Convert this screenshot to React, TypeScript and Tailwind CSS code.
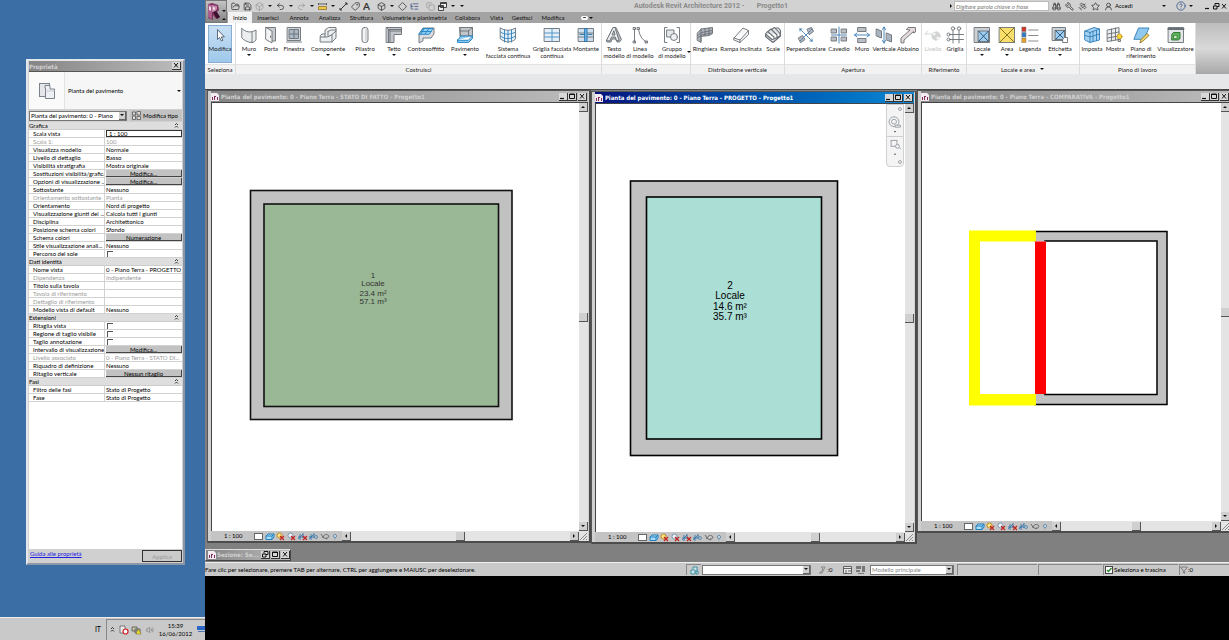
import React, { useState } from "react";
import type { ReactNode } from "react";
import {
  FolderOpen, Save, Undo2, Redo2, Tag, Box, Diamond, ListTree, Copy,
  Binoculars, Wrench, Satellite, Star, UserRound, CircleHelp, Funnel, Volume2,
} from "lucide-react";

const SK = { fill: "none", stroke: "#6a6f75", strokeWidth: 0.9, strokeLinejoin: "round" as const, strokeLinecap: "round" as const };

function Svg({ children }: { children: ReactNode }) {
  return (
    <svg className="block h-[18px] w-[18px] shrink-0" viewBox="0 0 18 18" aria-hidden="true" {...SK}>
      {children}
    </svg>
  );
}

const ICONS: Record<string, ReactNode> = {
  cursor: <path d="M6.500 4v9.500l2.200-2 1.600 3.500 1.600-.7-1.600-3.400H13z" fill="#fff" stroke="#3c4a58" strokeWidth=".8" />,
  wall: <path d="M2 2.500c4 4 9 4.500 14 1.500v10c-1 1.500-2.500 2.500-4 2.500-4 0-8-2-10-4.500zM12 16.500V6" fill="#eceef0" />,
  door: <><path d="M4 1.500h9.500V15H10" fill="#c9cdd1" /><path d="M4 1.500l6 3.500v12l-6-3.500z" fill="#f3f4f5" /><path d="M8.500 10v1.500" /></>,
  window: <><rect x="2.500" y="1.500" width="13" height="13" fill="#d3d6da" /><rect x="4.500" y="3.500" width="9" height="9" fill="#a9b7c6" /><path d="M9 3.500v9M4.500 8h9M1.500 16h15" /></>,
  component: <><path d="M1.500 9.500L3 8h3V4l3.500-2.500H17V12l-4 4H1.500z" fill="#eceef0" /><path d="M6 8v3H1.500M6 11h2.500l4-2M9 5.500l3-1.500h5M9 5.500V10M13 8.500V16M13 8.500L17 5" /></>,
  column: <><rect x="6" y="1.500" width="6" height="15" rx="2.500" fill="#f2f3f4" /><path d="M10 3.500v11" stroke="#bbb" /></>,
  roof: <><path d="M1.500 1.500h15v7H9v8H1.500z" fill="#c3c6ca" /><path d="M1.500 1.500L5 5h11.500M5 5v11.500M3.500 3.500h13M3.500 3.500v13" /></>,
  ceiling: <><path d="M2 16.500V8L6 2h11v6l-3 4H6v2.500z" fill="#d9dde1" /><path d="M2 8l4-5.500h10L12.500 8z" fill="#8fd0f5" stroke="#2283c4" /><path d="M7 2.500L4 8M12 2.500L8 8M4 5.500h10" stroke="#2283c4" /></>,
  floor: <><path d="M4 1.500h12.500V10H5z" fill="#c2c6ca" /><path d="M4 1.500v9M12.500 5L16.500 1.500M12.500 5v5M4 5h8.500" /><path d="M1.500 14l3.500-4h11.500l-4 4zM1.500 14v2.500h11l4-4V10" fill="#8cc9f1" stroke="#2283c4" /></>,
  curtain: <><path d="M1.500 2c4 3 10 3 15 0v11c-4 4-10 4-15 0z" fill="#e3f1fa" /><path d="M5.500 4v12M9 4.500v12M12.500 4v12" stroke="#337eb5" /><path d="M1.500 6c4 3 10 3 15 0M1.500 10c4 3.500 10 3.500 15 0" stroke="#337eb5" /></>,
  grid: <><rect x="1.500" y="2.500" width="15" height="13" fill="#e2effa" /><path d="M9 2.500v13M1.500 7h15M1.500 11h15" stroke="#4a8dc0" /></>,
  mullion: <><rect x="1.500" y="2.500" width="15" height="13" fill="#d0e0ee" /><path d="M1.500 7h15M1.500 11h15" /><path d="M8 2.500h2v13H8zM3 8.500h4M11 8.500h4" fill="#74b9ea" stroke="#1e71ae" /></>,
  text: <><path d="M1.500 15L8 1.500h3l5.500 12-2 2.500h-2.500L10.500 13H7l-1 3H2.500z" fill="#b5babf" /><path d="M1.500 14.500L8 1.500h2l4 13h-2.500L10.300 11H6.500L5 14.500zM7.500 9H10L9 5z" fill="#eceef0" /></>,
  line: <path d="M3.500 3v13M7.500 3C8.500 9 10.500 13.500 15.500 16M2.500 1.500h2v2h-2zM2.500 15h2v2h-2zM6.500 1.500h2v2h-2zM14.500 15h2v2h-2z" />,
  group: <><path d="M4 1.500H1.500v15H4M14 1.500h2.500v15H14" /><rect x="4" y="4" width="7" height="7" fill="#e5e8ea" /><circle cx="11" cy="11" r="3.500" fill="#eef0f2" /></>,
  railing: <><path d="M1.500 7L5 3l11.500-1.500v6L13 9.500l-8 1v6l-3.500-2z" fill="#aeb4ba" /><path d="M1.500 9.500l4-3 11-2M1.500 12l4-3 10-2M5 3v12M9 2.500v7M13 2v7" /></>,
  ramp: <path d="M2 12L11 2l5.500 2.500v4L8 16.500 2 14zM2 12l6 2 8.500-9.500M8 14v2.500" fill="#f5f6f7" />,
  stairs: <path d="M1.500 8l2-2.500L10 11v2l-2 .5zM4.500 5L7 3l6 6v2.500l-2 1M8 3l2.500-1.500 5.500 6V10l-2 1M1.500 8v2.500L9 16.500l7.500-6.500V8M11.500 2l3 0 2 2.500V8" fill="#e0e2e5" strokeWidth="1.100" />,
  perp: <><path d="M10.500 3l4-1.500 2 4-4 3zM1.500 12l4-2.500 2.500 4-4 3z" fill="#b5b9be" /><path d="M3 3l12 12M3 3h2.500M3 3v2.500M15 15h-2.500M15 15v-2.500M3 15L15 3" stroke="#3a7ab3" strokeDasharray="2 1" /></>,
  shaft: <><path d="M1.500 3h5v4h-5zM1.500 11h5v4h-5zM11.500 3h5v4h-5zM11.500 11h5v4h-5z" fill="#babfc5" /><path d="M9 1v16M1.500 9h15" stroke="#3a7ab3" /></>,
  wallopen: <><path d="M5 1.500h8v4H5zM5 12.500h8v4H5z" fill="#babfc5" /><path d="M1.500 9h15M4 7L1.500 9 4 11M14 7l2.500 2-2.500 2" stroke="#3a7ab3" /></>,
  vertical: <><path d="M1.500 3l5 2v7l-5-2zM11.500 7l5 2v7l-5-2z" fill="#a8b4c0" /><path d="M9 1v16M7.500 3.500L9 1l1.500 2.500M7.500 14.500L9 17l1.500-2.500" stroke="#3a7ab3" /></>,
  dormer: <path d="M2 16.500V12L11 4 7.500 3.500 9 1.500h7.500V6l-2 1V5.500L5 14v2.500z" fill="#e4dadb" />,
  level: <><path d="M1 8h7M3.500 5L1.500 8" /><circle cx="12" cy="10" r="4" fill="#fff" /><path d="M12 6v8M8 10h8M12 10V6a4 4 0 0 1 4 4zM12 10v4a4 4 0 0 1-4-4z" fill="#777" /></>,
  gridlines: <><path d="M7 4v13M13 4v13M3.500 8.500H17.500M3.500 13.500H17.500" /><g fill="#fff"><circle cx="7" cy="2.500" r="1.700" /><circle cx="13" cy="2.500" r="1.700" /><circle cx="2.500" cy="8.500" r="1.500" /><circle cx="2.500" cy="13.500" r="1.500" /></g></>,
  room: <><rect x="1.500" y="1.500" width="15" height="15" fill="#cbd0d5" /><rect x="5.500" y="5" width="10" height="10.500" fill="#9dcdf0" /><path d="M5.500 5l10 10.500M15.500 5l-10 10.500" stroke="#254b72" /></>,
  area: <><rect x="1.500" y="1.500" width="15" height="15" fill="#f9df69" /><path d="M1.500 1.500l15 15M16.500 1.500l-15 15" stroke="#76651d" /></>,
  legend: <><g stroke="#777" strokeWidth=".5"><rect x="1" y="1" width="4" height="4.500" fill="#cf3528" /><rect x="1" y="6.500" width="4" height="4.500" fill="#2e7bc6" /><rect x="1" y="12" width="4" height="4.500" fill="#e5a028" /></g><path d="M7.500 4H17M7.500 9.500H17M7.500 15H17" strokeWidth=".8" /></>,
  tag: <><rect x="1.500" y="1.500" width="13" height="13" fill="#cbd0d5" /><rect x="4.500" y="4.500" width="9" height="9" fill="#9dcdf0" /><path d="M4.500 4.500l9 9M13.500 4.500l-9 9" stroke="#254b72" /><path d="M12 13l1.500-1.500h3v5H12z" fill="#fff" /></>,
  setplane: <><path d="M2 5l9-3.500L16.500 3v11L7 16.500 2 14z" fill="#a5d2f2" stroke="#2f7db8" /><path d="M7 6.500L16.500 3M2 5l5 1.500v10M2 9.500l5 1.500 9.500-3M10 5.500v10M13.500 4.500v10" stroke="#2f7db8" /></>,
  show: <><path d="M1.500 4L13 1.500v12L1.500 15.500zM5.500 3v12M9.500 2v12M1.500 8L13 6M1.500 12L13 10" fill="#eaecef" /><circle cx="13.500" cy="10.500" r="2.500" fill="#f8d83c" stroke="#c89b19" /><path d="M12.500 13.500h2v2h-2z" fill="#ccc" /></>,
  refplane: <><path d="M2 13L6.500 2H17l-5 11z" fill="#8fc9f0" stroke="#2f7db8" /><path d="M8 16.500l1-3 6-6 2 2-6.500 6z" fill="#f4d567" stroke="#8c7430" /></>,
  viewer: <><rect x="1.500" y="1.500" width="15" height="15" fill="#e3e6e8" /><path d="M1.500 3h15" strokeWidth="2" /><path d="M5 8l1.500-1.500h6.500v6L11.500 14H5z" fill="#5db25a" stroke="#2d7230" /><path d="M7 9.500h3v3H7z" fill="#c9eac5" stroke="#2d7230" strokeWidth=".6" /></>,
};

type Tool = { icon: string; label: string[]; w: string; arrow?: boolean; off?: boolean; on?: boolean; side?: boolean };
type Group = { name: string; w: string; tools: Tool[]; arrow?: boolean };

const GROUPS: Group[] = [
  { name: "Seleziona", w: "w-[31px]", tools: [{ icon: "cursor", label: ["Modifica"], w: "ml-[3px] w-6", on: true }] },
  { name: "Costruisci", w: "w-[366px]", tools: [
    { icon: "wall", label: ["Muro"], w: "ml-[2px] w-[22px]", arrow: true },
    { icon: "door", label: ["Porta"], w: "w-[22px]" },
    { icon: "window", label: ["Finestra"], w: "w-6" },
    { icon: "component", label: ["Componente"], w: "w-11", arrow: true },
    { icon: "column", label: ["Pilastro"], w: "w-[30px]", arrow: true },
    { icon: "roof", label: ["Tetto"], w: "w-7", arrow: true },
    { icon: "ceiling", label: ["Controsoffitto"], w: "w-9" },
    { icon: "floor", label: ["Pavimento"], w: "w-[42px]", arrow: true },
    { icon: "curtain", label: ["Sistema", "facciata continua"], w: "w-11" },
    { icon: "grid", label: ["Griglia facciata", "continua"], w: "w-11" },
    { icon: "mullion", label: ["Montante"], w: "w-6" },
  ] },
  { name: "Modello", w: "w-[89px]", tools: [
    { icon: "text", label: ["Testo", "modello"], w: "w-6" },
    { icon: "line", label: ["Linea", "di modello"], w: "w-7" },
    { icon: "group", label: ["Gruppo", "di modello"], w: "w-9", side: true },
  ] },
  { name: "Distribuzione verticale", w: "w-[94px]", tools: [
    { icon: "railing", label: ["Ringhiera"], w: "w-7" },
    { icon: "ramp", label: ["Rampa inclinata"], w: "w-11" },
    { icon: "stairs", label: ["Scale"], w: "w-5" },
  ] },
  { name: "Apertura", w: "w-[137px]", tools: [
    { icon: "perp", label: ["Perpendicolare"], w: "w-[42px]" },
    { icon: "shaft", label: ["Cavedio"], w: "w-6" },
    { icon: "wallopen", label: ["Muro"], w: "w-[22px]" },
    { icon: "vertical", label: ["Verticale"], w: "w-[22px]" },
    { icon: "dormer", label: ["Abbaino"], w: "w-[26px]" },
  ] },
  { name: "Riferimento", w: "w-[45px]", tools: [
    { icon: "level", label: ["Livello"], w: "w-[22px]", off: true },
    { icon: "gridlines", label: ["Griglia"], w: "w-[22px]" },
  ] },
  { name: "Locale e area", w: "w-[113px]", arrow: true, tools: [
    { icon: "room", label: ["Locale"], w: "w-[30px]", arrow: true },
    { icon: "area", label: ["Area"], w: "w-5", arrow: true },
    { icon: "legend", label: ["Legenda"], w: "w-[26px]" },
    { icon: "tag", label: ["Etichetta"], w: "w-[34px]", arrow: true },
  ] },
  { name: "Piano di lavoro", w: "w-[116px]", tools: [
    { icon: "setplane", label: ["Imposta"], w: "w-6" },
    { icon: "show", label: ["Mostra"], w: "w-[22px]" },
    { icon: "refplane", label: ["Piano di", "riferimento"], w: "w-[30px]" },
    { icon: "viewer", label: ["Visualizzatore"], w: "w-[39px]" },
  ] },
];

function Caret({ dir = "down" }: { dir?: "down" | "up" | "left" | "right" }) {
  const d = { down: "M1 2h4L3 4z", up: "M1 4h4L3 2z", left: "M4 1v4L2 3z", right: "M2 1v4l2-2z" }[dir];
  return <svg className="block h-[6px] w-[6px] shrink-0" viewBox="0 0 6 6" aria-hidden="true"><path d={d} fill="#111" /></svg>;
}

function Logo() {
  return (
    <button aria-label="Menu applicazione" className="flex h-[23px] w-[22px] shrink-0 items-center border border-[#777] bg-linear-to-b from-[#c4c4c4] to-[#858585] pl-px">
      <svg className="h-[18px] w-[14px] shrink-0" viewBox="0 0 14 18" aria-hidden="true">
        <path d="M1 1l4-1 6 2 1 5-2 2 3 5-4 2-3-4v5l-5-2z" fill="#7d2f5c" />
        <path d="M1 1l4 1v14l-4-2z" fill="#a85f8c" /><path d="M5 2l5 1v3L8 9l-3 0z" fill="#c48aae" /><path d="M6 9l3-1 4 6-3 2z" fill="#3e1030" />
        <path d="M2 3l2 1v4L2 7zM6 4l2 .500v2L6 7z" fill="#f2dce8" />
      </svg>
      <span className="flex h-full flex-col justify-between pt-[7px]"><Caret /><Caret dir="up" /></span>
    </button>
  );
}

function TitleBar() {
  const ic = "h-[9px] w-[9px] shrink-0";
  return (
    <div className="flex h-3 items-center overflow-hidden bg-[#d2d2d2] text-[#333]">
      <div className="flex flex-1 items-center pl-1">
        <div className="flex items-center gap-[3px]">
          <FolderOpen className={ic} /><Save className={ic} /><Box className="h-[9px] w-[9px] shrink-0 text-[#999]" /><Caret />
          <Undo2 className={ic} /><Caret /><Redo2 className="h-[9px] w-[9px] shrink-0 text-[#999]" /><Caret />
          <svg className={ic} viewBox="0 0 9 9" aria-hidden="true"><path d="M.5 4.500h8v3h-8z" fill="#f0c64a" stroke="#86691a" strokeWidth=".7" /><path d="M.5 1v2M8.500 1v2M.5 2h8" stroke="#444" strokeWidth=".8" /></svg><Caret />
          <svg className={ic} viewBox="0 0 9 9" aria-hidden="true"><path d="M1 8l7-7M1 6v2h2M6 1h2v2" fill="none" stroke="#333" /></svg>
          <Tag className="h-[9px] w-[9px] shrink-0 -scale-x-100" />
          <span className="text-[10px] leading-3 font-bold">A</span>
          <span className="w-px" />
          <Box className={ic} /><Caret /><Diamond className={ic} /><ListTree className="h-[9px] w-[9px] shrink-0 text-[#334a80]" />
          <span className="w-px" />
          <Copy className="h-[9px] w-[9px] shrink-0 text-[#999]" />
          <svg className={ic} viewBox="0 0 9 9" fill="#eee" stroke="#333" strokeWidth=".9" aria-hidden="true"><path d="M2.500.500h6v5h-6zM2.500 1.500h6M.5 3.500h5v5h-5zM.5 4.500h5" /></svg>
          <Caret /><Caret />
        </div>
      </div>
      <div className="flex w-[314px] shrink-0 gap-3 font-['Roboto',sans-serif] text-[7px] leading-3 font-bold text-[#8a8a8a]"><span>Autodesk Revit Architecture 2012 -</span><span>Progetto1</span></div>
      <div className="flex w-[281px] shrink-0 items-center">
        <Caret dir="right" />
        <input aria-label="Ricerca" placeholder="Digitare parola chiave o frase" className="h-[10px] w-[95px] border border-[#bbb] bg-white px-px text-[6px] italic placeholder:text-[#777]" />
        <div className="ml-[3px] flex items-center gap-[4px]"><Binoculars className={ic} /><Wrench className="h-[9px] w-[9px] shrink-0 -scale-x-100" /><Satellite className={ic} /><Star className={ic} /><UserRound className={ic} /></div>
        <span className="ml-0.5 w-[46px] text-[6px] leading-3 text-black">Accedi</span><Caret />
        <span className="w-[9px]" /><CircleHelp className="h-[10px] w-[10px] text-[#36598c]" /><span className="w-0.5" /><Caret />
        <div className="ml-auto flex pr-px"><WinGlyph kind="min" /><WinGlyph kind="restore" /><WinGlyph kind="close" /></div>
      </div>
    </div>
  );
}

function WinGlyph({ kind }: { kind: "min" | "max" | "restore" | "close" }) {
  return (
    <svg className="h-[7px] w-[8px] shrink-0" viewBox="0 0 8 7" aria-hidden="true" fill="none" stroke="#111">
      {kind === "min" && <path d="M1 5.500h4" strokeWidth="1.200" />}
      {kind === "max" && <path d="M1.500 1h5v4.500h-5zM1.500 1.500h5" />}
      {kind === "restore" && <path d="M3 2.500v-2h4v3H5M1.500 3h3.500v3H1.500z" />}
      {kind === "close" && <path d="M2 1l4 4.500M6 1L2 5.500" />}
    </svg>
  );
}

function WinButton({ kind, label }: { kind: "min" | "max" | "restore" | "close"; label: string }) {
  return (
    <button aria-label={label} className="flex h-2 w-[9px] shrink-0 items-center justify-center overflow-hidden border-r border-b border-[#333] bg-[#d8d8d8]">
      <WinGlyph kind={kind} />
    </button>
  );
}

const TABS: [string, string][] = [
  ["Inizio", "w-6"], ["Inserisci", "w-8"], ["Annota", "w-[30px]"], ["Analizza", "w-[31px]"], ["Struttura", "w-[33px]"],
  ["Volumetrie e planimetria", "w-[73px]"], ["Collabora", "w-[33px]"], ["Vista", "w-[25px]"], ["Gestisci", "w-[26px]"], ["Modifica", "w-[36px]"],
];

function Tabs({ active, pick }: { active: string; pick: (t: string) => void }) {
  return (
    <nav className="flex h-[11px] items-center overflow-hidden bg-[#a3a3a3] pl-px text-[6px] leading-[10px]">
      {TABS.map(([t, w]) => (
        <button key={t} onClick={() => pick(t)} className={`${w} h-full shrink-0 text-center whitespace-nowrap ${t === active ? "bg-[#f2f2f2]" : "text-[#111]"}`}>{t}</button>
      ))}
      <span className="ml-[10px] flex h-1 w-[7px] items-center justify-center rounded-xs bg-white"><span className="h-px w-[3px] bg-[#444]" /></span><Caret />
    </nav>
  );
}

function Ribbon() {
  return (
    <div className="flex h-[51px] bg-linear-to-b from-[#bdbdbd] via-[#d9d9d9] to-[#a8a8a8] text-[6px] leading-[7px] text-[#222]">
      {GROUPS.map((g) => (
        <section key={g.name} className={`flex shrink-0 flex-col border-r border-[#dcdcdc] bg-white ${g.w}`}>
          <div className="flex h-[41px] pt-[2px]">
            {g.tools.map((t) => (
              <button key={t.label[0]} className={`flex shrink-0 flex-col items-center ${t.w} ${t.on ? "h-[38px] border border-[#86aed2] bg-linear-to-b from-[#c9e0f4] to-[#9fc8ea]" : "pt-px"} ${t.off ? "opacity-30" : ""}`}>
                <Svg>{ICONS[t.icon]}</Svg>
                <span className="relative mt-px flex flex-col whitespace-nowrap">
                  {t.label.map((l) => <span key={l}>{l}</span>)}
                  {t.side && <span className="absolute bottom-1 left-full"><Caret /></span>}
                </span>
                {t.arrow && <Caret />}
              </button>
            ))}
          </div>
          <div className="flex h-[10px] items-center justify-center gap-1 border-t border-[#e2e2e2] bg-[#f2f2f2] pb-px">{g.name}{g.arrow && <Caret />}</div>
        </section>
      ))}
    </div>
  );
}

const BTN = "flex h-[9px] w-[9px] shrink-0 items-center justify-center border-r border-b border-[#555] bg-[#d0d0d0]";

function ViewIcons() {
  return (
    <svg className="h-[9px] w-[86px] shrink-0" viewBox="0 0 86 9" fill="none" aria-hidden="true">
      <rect x=".5" y="1.500" width="8" height="6" fill="#fff" stroke="#666" />
      <path d="M12 4l2-2h6v3l-2 2.500h-6zM12 4h6v3.500M18 4l2-2" fill="#a9dcf8" stroke="#207fbc" />
      <circle cx="25.500" cy="3.500" r="2.500" fill="#ffe483" stroke="#bb8b22" /><path d="M26 4l4 4M30 4l-4 4" stroke="#c2231d" strokeWidth="1.200" />
      <circle cx="36.500" cy="3.500" r="2.500" fill="#edf5fa" stroke="#7b96b0" /><path d="M37 4l4 4M41 4l-4 4" stroke="#c2231d" strokeWidth="1.200" />
      <path d="M44 5h6M46 2v6M49 1v5M44 7l5-5" stroke="#286fa9" strokeWidth=".8" /><path d="M49 4l4 4M53 4l-4 4" stroke="#c2231d" strokeWidth="1.200" />
      <path d="M55 5h6M57 2v6M60 1v5M55 7l5-5" stroke="#286fa9" strokeWidth=".8" /><circle cx="62" cy="5" r="1.500" stroke="#5a8fb7" />
      <path d="M67 2l2 3c2-3 3-3 5-2s0 4-2 3M68 5l5 2" stroke="#555" strokeWidth=".8" />
      <circle cx="81" cy="4" r="1.500" fill="#e8f3fa" stroke="#6287a4" /><path d="M80.500 7h1" stroke="#6287a4" />
    </svg>
  );
}

function Grip() {
  return <svg className="h-[9px] w-[9px] shrink-0" viewBox="0 0 9 9" aria-hidden="true"><path d="M1 8l7-7M4 8l4-4M7 8l1-1" stroke="#888" /></svg>;
}

function DrawWindow({ title, frame, height, activeWin, children }: { title: string; frame: string; height: string; activeWin?: boolean; children: ReactNode }) {
  return (
    <section className={`flex min-w-0 flex-col border-t border-l border-[#555] bg-[#d0d0d0] ${frame}`}>
      <div className="flex flex-col border-r-2 border-b-2 border-[#4c4c4c] pr-px pl-[3px]">
        <header className={`flex h-[11px] items-center gap-0.5 pr-px font-['DejaVu_Sans_Condensed','DejaVu_Sans',sans-serif] text-[6px] font-bold ${activeWin ? "bg-linear-to-r from-[#06127e] to-[#1188d4] text-white" : "bg-linear-to-r from-[#858585] to-[#bcbcbc] text-[#d0d0d0]"}`}>
          <DocIcon />
          <span className="min-w-0 flex-1 truncate leading-[10px]">{title}</span>
          <div className="flex"><WinButton kind="min" label="Riduci a icona" /><WinButton kind="max" label="Ingrandisci" /><span className="w-px" /><WinButton kind="close" label="Chiudi" /></div>
        </header>
        <div className={`flex border-t border-l border-[#444] ${height}`}>
          <div className="relative min-w-0 flex-1 bg-white">{children}</div>
          <div className="flex w-[9px] shrink-0 flex-col bg-[#e4e4e4]">
            <button aria-label="Scorri su" className={BTN}><Caret dir="up" /></button>
            <div className="flex-1" /><div className={BTN} /><div className="flex-1" />
            <button aria-label="Scorri giù" className={BTN}><Caret /></button>
          </div>
        </div>
        <footer className="flex h-[10px] items-center bg-[#e4e4e4]">
          <div className="flex w-[131px] shrink-0 items-center bg-[#c4c4c4] text-[6px] leading-[10px]">
            <span className="w-[43px] shrink-0 pl-[13px]">1 : 100</span><ViewIcons />
          </div>
          <button aria-label="Scorri a sinistra" className={BTN}><Caret dir="left" /></button>
          <div className="flex-1" /><div className={BTN} /><div className="flex-1" />
          <button aria-label="Scorri a destra" className={BTN}><Caret dir="right" /></button>
          <Grip />
        </footer>
      </div>
    </section>
  );
}

function DocIcon() {
  return (
    <svg className="h-2 w-[8px] shrink-0" viewBox="0 0 8 8" aria-hidden="true">
      <path d="M0 0h6l2 2v6H0z" fill="#f3e9f0" /><path d="M1 4h1v3H1zM3 3h2v1H4v3H3zM6 4h1v3H6z" fill="#7d2c5c" />
    </svg>
  );
}

const PLAN = "block h-full w-full font-['Liberation_Sans',sans-serif]";

function PlanStato() {
  return (
    <svg className={PLAN}>
      <g stroke="#111" strokeWidth="1.600">
        <rect x="38.500" y="87.500" width="261.500" height="229" fill="#c1c1c1" />
        <rect x="52" y="101" width="234.500" height="202.500" fill="#9ab896" />
      </g>
      <g fontSize="8" fill="#333" textAnchor="middle">
        <text x="161" y="175">1</text><text x="161" y="183">Locale</text><text x="161" y="193">23.4 m²</text><text x="161" y="201">57.1 m³</text>
      </g>
    </svg>
  );
}

function PlanProgetto() {
  return (
    <svg className={PLAN}>
      <g stroke="#000" strokeWidth="1.600">
        <rect x="34.500" y="77" width="207" height="274.500" fill="#c1c1c1" />
        <rect x="50.500" y="93" width="175" height="242" fill="#abded5" />
      </g>
      <g fontSize="10" fill="#000" textAnchor="middle">
        <text x="134" y="185">2</text><text x="134" y="195">Locale</text><text x="134" y="206">14.6 m²</text><text x="134" y="216">35.7 m³</text>
      </g>
    </svg>
  );
}

function PlanComparativa() {
  return (
    <svg className={PLAN}>
      <rect x="113" y="128.500" width="132" height="173" fill="#c1c1c1" stroke="#000" strokeWidth="1.500" />
      <rect x="123" y="138" width="112" height="153.500" fill="#fff" stroke="#000" strokeWidth="1.500" />
      <path d="M47 127.500h67v11H58v152.500h56v11.500H47z" fill="#ff0" />
      <path d="M112 138.500h12v152.500h-12z" fill="#fff" />
      <rect x="113" y="138.500" width="11" height="152.500" fill="#f00" />
    </svg>
  );
}

function NavBar() {
  return (
    <div className="absolute top-0 right-px flex h-[63px] w-[18px] flex-col items-center justify-between rounded-b-sm border border-[#d0d0d0] bg-[#f4f4f4] py-px">
      <svg className="h-full w-4" viewBox="0 0 16 60" fill="none" stroke="#9aa0a6" aria-hidden="true">
        <circle cx="13" cy="3" r="1.500" /><circle cx="7" cy="16" r="5" /><circle cx="7" cy="16" r="2.500" /><path d="M8 19.500h5.500v2H8z" fill="#f4f4f4" />
        <path d="M0 31h16" stroke="#ccc" /><rect x="4" y="35" width="6" height="6" /><circle cx="10.500" cy="41" r="2" fill="#f4f4f4" /><path d="M12.500 42.500l1.500 1.500" />
        <path d="M7 26h2M7 49h2" stroke="#555" /><circle cx="13" cy="57" r="1.500" />
      </svg>
    </div>
  );
}

function Select({ label, value, className }: { label: string; value?: string; className: string }) {
  return (
    <div className={`relative h-[10px] border border-[#777] bg-white ${className}`}>
      <select aria-label={label} className="block h-2 w-full appearance-none overflow-hidden pr-2 pl-px text-[6px] leading-[8px]"><option>{value}</option></select>
      <span className="pointer-events-none absolute top-0 right-0 flex h-2 w-[7px] items-center justify-center border-r border-b border-[#666] bg-[#cfcfcf]"><Caret /></span>
    </div>
  );
}

type Row = [label: string, value: string, kind?: "off" | "button" | "check" | "edit"];
const PROPS: { name: string; rows: Row[] }[] = [
  { name: "Grafica", rows: [
    ["Scala vista", "1 : 100", "edit"], ["Scala  1:", "100", "off"], ["Visualizza modello", "Normale"], ["Livello di dettaglio", "Basso"],
    ["Visibilità stratigrafia", "Mostra originale"], ["Sostituzioni visibilità/grafica", "Modifica...", "button"], ["Opzioni di visualizzazione ...", "Modifica...", "button"],
    ["Sottostante", "Nessuno"], ["Orientamento sottostante", "Pianta", "off"], ["Orientamento", "Nord di progetto"], ["Visualizzazione giunti dei ...", "Calcola tutti i giunti"],
    ["Disciplina", "Architettonico"], ["Posizione schema colori", "Sfondo"], ["Schema colori", "Numerazione", "button"], ["Stile visualizzazione anali...", "Nessuno"], ["Percorso del sole", "", "check"],
  ] },
  { name: "Dati identità", rows: [
    ["Nome vista", "0 - Piano Terra - PROGETTO"], ["Dipendenza", "Indipendente", "off"], ["Titolo sulla tavola", ""], ["Tavola di riferimento", "", "off"],
    ["Dettaglio di riferimento", "", "off"], ["Modello vista di default", "Nessuno"],
  ] },
  { name: "Estensioni", rows: [
    ["Ritaglia vista", "", "check"], ["Regione di taglio visibile", "", "check"], ["Taglio annotazione", "", "check"], ["Intervallo di visualizzazione", "Modifica...", "button"],
    ["Livello associato", "0 - Piano Terra - STATO DI...", "off"], ["Riquadro di definizione", "Nessuno"], ["Ritaglio verticale", "Nessun ritaglio", "button"],
  ] },
  { name: "Fasi", rows: [["Filtro delle fasi", "Stato di Progetto"], ["Fase", "Stato di Progetto"]] },
];

function Value({ label, value, kind }: { label: string; value: string; kind?: Row[2] }) {
  if (kind === "button") return <button aria-label={`${label} ${value}`} className="block h-[7px] w-full border-r border-b border-[#444] bg-[#c2c2c2] text-center text-[6px] leading-[7px]">{value}</button>;
  if (kind === "check") return <input type="checkbox" aria-label={label} className="ml-px block h-[6px] w-[6px] appearance-none border-t border-l border-[#555] bg-white checked:bg-[#555]" />;
  if (kind === "edit") return <input aria-label={label} defaultValue={value} className="block h-[7px] w-full border border-[#333] bg-white pl-0.5 text-[6px] leading-[6px]" />;
  return <>{value || "\u00a0"}</>;
}

function Chevrons() {
  return <svg className="h-[5px] w-[5px] shrink-0" viewBox="0 0 5 5" fill="none" stroke="#111" aria-hidden="true"><path d="M1 2l1.500-1.500L4 2M1 4.500l1.500-1.500L4 4.500" strokeWidth=".8" /></svg>;
}

function Properties() {
  return (
    <aside className="mt-[59px] ml-[26px] flex w-[159px] flex-col border-2 border-[#e4e8ec] border-r-[#8c96a4] border-b-[#8c96a4] bg-[#d0d0d0] px-px text-[6px] leading-[7px] text-black">
      <header className="flex h-[10px] items-center justify-between bg-linear-to-r from-[#858585] to-[#bcbcbc] pr-px font-['DejaVu_Sans_Condensed','DejaVu_Sans',sans-serif] font-bold text-[#d0d0d0]">Proprietà<WinButton kind="close" label="Chiudi proprietà" /></header>
      <div className="flex h-[38px] items-center border-t border-[#555] bg-[#f6f6f6]">
        <div className="flex h-full w-[36px] items-center justify-center border-r border-[#e2e2e2] bg-[#fafafa]">
          <svg className="h-[18px] w-[18px]" viewBox="0 0 18 18" stroke="#7c828a" aria-hidden="true"><rect x="1.500" y="1.500" width="10" height="13" fill="#e4e6ea" /><path d="M7 6V3.500h5V7h4.500v9.500H7.500V6z" fill="#eef0f5" /><path d="M7.500 9h9" stroke="#c5c9d0" /></svg>
        </div>
        <span className="flex-1 pl-[3px]">Pianta del pavimento</span><Caret />
      </div>
      <div className="flex h-[13px] items-center justify-between">
        <Select label="Vista" value="Pianta del pavimento: 0 - Piano" className="w-[98px]" />
        <button className="flex h-[11px] items-center gap-0.5 bg-[#c2c2c2] pr-1 pl-0.5">
          <svg className="h-[9px] w-[9px]" viewBox="0 0 9 9" fill="#ddd" stroke="#555" strokeWidth=".8" aria-hidden="true"><path d="M.5 1h3v3h-3zM5 .5h3.500v3.500H5zM.5 5h3v3.500h-3zM5 5.500h3.500v3H5z" /></svg>
          Modifica tipo
        </button>
      </div>
      <table className="w-full table-fixed border-separate border-spacing-0 bg-white whitespace-nowrap">
        <colgroup><col className="w-[76px]" /><col /></colgroup>
        {PROPS.map((s) => (
          <tbody key={s.name}>
            <tr><th colSpan={2} className="h-2 border-b border-[#ccc] bg-[#dedede] p-0 text-left font-normal"><div className="flex h-[7px] items-center justify-between pr-[3px]">{s.name}<Chevrons /></div></th></tr>
            {s.rows.map(([l, v, k]) => (
              <tr key={l} className={k === "off" ? "text-[#9a9a9a]" : ""}>
                <td className="h-2 overflow-hidden border-r border-b border-[#d2d2d2] p-0 pl-1">{l}</td>
                <td className="h-2 overflow-hidden border-b border-[#d2d2d2] p-0 pl-px"><Value label={l} value={v} kind={k} /></td>
              </tr>
            ))}
          </tbody>
        ))}
      </table>
      <div className="h-[147px] bg-white" />
      <footer className="flex h-[14px] items-start justify-between pt-px">
        <a href="#guida" className="pl-px text-[#2020e0] underline">Guida alle proprietà</a>
        <button disabled className="h-[12px] w-10 border border-[#333] bg-[#cacaca] text-[#999]">Applica</button>
      </footer>
    </aside>
  );
}

function Taskbar() {
  return (
    <div className="mt-auto flex h-[23px] items-center justify-end border-t border-[#eee] bg-[#c9c9c9] text-[6px] leading-[8px]">
      <span className="pr-[5px] text-[7px]">IT</span>
      <div className="flex h-[21px] w-[99px] items-center gap-[4px] border-t border-l border-[#888] pl-[3px]">
        <Chevrons />
        <svg className="h-[10px] w-[23px] shrink-0" viewBox="0 0 23 10" fill="none" aria-hidden="true">
          <path d="M1 1h5v7H1z" fill="#eee" stroke="#777" /><circle cx="6.500" cy="6.500" r="2.500" fill="#fff" stroke="#d02020" strokeWidth="1.200" />
          <path d="M13 2h5v4h-5zM16 4h5v4h-5z" fill="#c9c9a0" stroke="#666" /><path d="M19.500 4l2.500 5h-5z" fill="#f3e337" stroke="#7a7220" strokeWidth=".6" />
        </svg>
        <Volume2 className="h-2 w-2 shrink-0 text-[#777]" />
        <div className="flex-1 text-center"><div>15:39</div><div>16/06/2012</div></div>
        <svg className="h-[7px] w-2 shrink-0" viewBox="0 0 8 7" aria-hidden="true"><path d="M0 0h8v4H0z" fill="#2d65c4" /><path d="M1 5.500h7" stroke="#4878b8" /></svg>
      </div>
    </div>
  );
}

function StatusBar() {
  const [drag, setDrag] = useState(true);
  const cell = "h-[11px] border-t border-l border-[#888]";
  return (
    <div className="flex h-[14px] items-center gap-px overflow-hidden border-t border-[#eee] bg-[#c9c9c9] text-[6px] leading-[10px] whitespace-nowrap text-black">
      <div className="min-w-0 flex-1 truncate">Fare clic per selezionare, premere TAB per alternare, CTRL per aggiungere e MAIUSC per deselezionare.</div>
      <div className={`flex w-[15px] items-center justify-center ${cell}`}>
        <svg className="h-[9px] w-[9px]" viewBox="0 0 9 9" fill="#c8e7ef" stroke="#247f93" strokeWidth=".8" aria-hidden="true"><path d="M3 3V1h4v4M1 4h4v4H1zM6 5h2v3H6z" /></svg>
      </div>
      <Select label="Workset attivo" className="w-[109px]" />
      <div className="flex w-[26px] items-center justify-center gap-0.5"><svg className="h-2 w-2" viewBox="0 0 8 8" fill="none" stroke="#888" aria-hidden="true"><path d="M1 7h3L7 1H3l2 2-3 4" /></svg>:0</div>
      <div className="flex w-[30px] items-center justify-center gap-1">
        <svg className="h-[9px] w-[9px]" viewBox="0 0 9 9" fill="#e8e8e8" stroke="#444" aria-hidden="true"><path d="M.5 1.500h8v7h-8zM.5 3.500h8M3 5v3M5 6h3" strokeWidth=".8" /></svg>
        <svg className="h-2 w-[9px]" viewBox="0 0 9 8" fill="#777" aria-hidden="true"><path d="M0 0h5v3H0zM6 0h3v6H6zM0 4h4v2H0zM2 7h6v1H2z" /></svg>
      </div>
      <div className="text-[#888]"><Select label="Opzione di progettazione" value="Modello principale" className="w-[84px]" /></div>
      <div className={`ml-0.5 w-[80px] ${cell}`} /><div className={`w-[64px] ${cell}`} />
      <label className={`flex w-[75px] items-center gap-px pl-px ${cell}`}>
        <span className="relative flex h-2 w-2">
          <input type="checkbox" checked={drag} onChange={() => setDrag(!drag)} className="h-2 w-2 appearance-none border border-[#444] bg-white" />
          {drag && <svg className="pointer-events-none absolute inset-0" viewBox="0 0 8 8" fill="none" stroke="#218a2c" strokeWidth="1.300"><path d="M2 4l1.500 1.500L6.500 2" /></svg>}
        </span>
        Seleziona e trascina
      </label>
      <div className={`flex w-[50px] items-center ${cell}`}><Funnel className="h-2 w-2 text-[#555]" />:0</div>
    </div>
  );
}

export default function App() {
  const [tab, setTab] = useState("Inizio");
  return (
    <div className="flex min-h-screen w-full overflow-hidden bg-black font-['Lato','Liberation_Sans',sans-serif] text-black">
      <div className="flex w-[205px] shrink-0 flex-col bg-[#3a6ea5]">
        <Properties />
        <Taskbar />
      </div>
      <main className="flex min-w-0 flex-1 flex-col">
        <div className="flex bg-[#a3a3a3]">
          <Logo />
          <div className="flex min-w-0 flex-1 flex-col"><TitleBar /><Tabs active={tab} pick={setTab} /></div>
        </div>
        <Ribbon />
        <div className="h-[15px] bg-[#e6e7e8]" />
        <div className="flex flex-col overflow-hidden border-t border-[#444] bg-[#808080]">
          <div className="-mr-1 flex items-start pl-[2px]">
            <DrawWindow title="Pianta del pavimento: 0 - Piano Terra - STATO DI FATTO - Progetto1" frame="flex-[384_1_0]" height="h-[429px]"><PlanStato /></DrawWindow>
            <DrawWindow title="Pianta del pavimento: 0 - Piano Terra - PROGETTO - Progetto1" frame="mt-px flex-[326_1_0]" height="h-[429px]" activeWin><PlanProgetto /><NavBar /></DrawWindow>
            <DrawWindow title="Pianta del pavimento: 0 - Piano Terra - COMPARATIVA - Progetto1" frame="flex-[316_1_0]" height="h-[419px]"><PlanComparativa /></DrawWindow>
          </div>
          <div className="mt-[5px] mb-px flex h-3 w-[86px] items-center gap-px border border-[#ddd] border-r-[#444] border-b-[#444] bg-linear-to-r from-[#858585] to-[#bcbcbc] pl-0.5 font-['DejaVu_Sans_Condensed','DejaVu_Sans',sans-serif] text-[6px] leading-[10px] font-bold text-[#d0d0d0]">
            <DocIcon /><span className="min-w-0 flex-1 truncate">Sezione: Se...</span>
            <WinButton kind="restore" label="Ripristina" /><WinButton kind="max" label="Ingrandisci sezione" /><WinButton kind="close" label="Chiudi sezione" />
          </div>
        </div>
        <StatusBar />
      </main>
    </div>
  );
}
